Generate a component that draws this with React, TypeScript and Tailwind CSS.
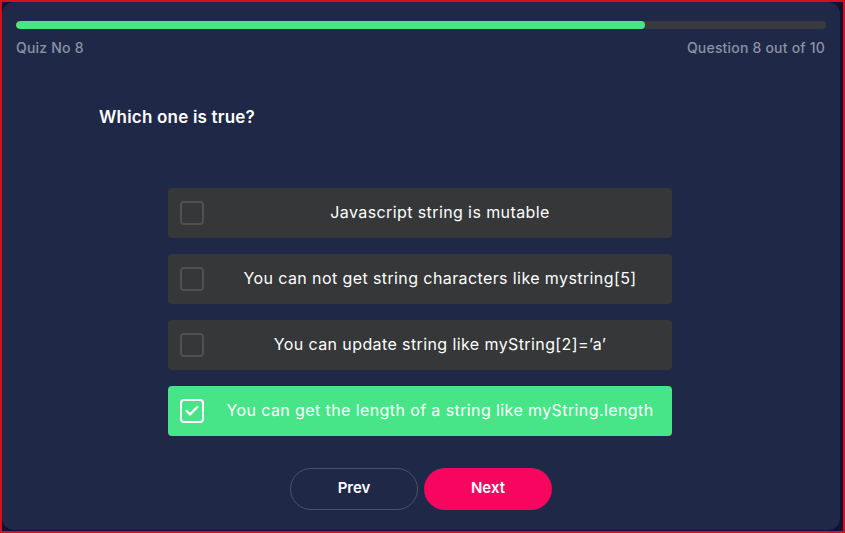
import { Check } from 'lucide-react';

const options = [
  'Javascript string is mutable',
  'You can not get string characters like mystring[5]',
  'You can update string like myString[2]=\u2019a\u2019',
  'You can get the length of a string like myString.length',
];

function Option({ text, checked }: { text: string; checked?: boolean }) {
  return (
    <div
      className={`flex items-center h-[50px] rounded-[4px] pl-3 ${
        checked ? 'bg-[#47e587]' : 'bg-[#353739]'
      }`}
    >
      <div
        className={`w-6 h-6 shrink-0 rounded-[4px] border-2 flex items-center justify-center ${
          checked ? 'border-white' : 'border-[#4d5154]'
        }`}
      >
        {checked && <Check className="w-4 h-4 text-white" strokeWidth={3.5} />}
      </div>
      <p className="flex-1 pl-1 text-center text-[16px] tracking-[0.4px] text-white -mt-[2px]">{text}</p>
    </div>
  );
}

export default function App() {
  return (
    <div
      className="w-[845px] h-[533px] bg-[#0f1230] border-2 border-[#d4101a] pr-[3px] pb-[1px]"
      style={{ fontFamily: 'Inter, "Open Sans", sans-serif' }}
    >
      <div className="h-full rounded-xl bg-[#1f2947] px-[14px] pt-[19px]">
        <div className="h-[8px] rounded-full bg-[#383a3d] overflow-hidden">
          <div className="h-full w-[77.7%] rounded-full bg-[#47e587]" />
        </div>
        <div className="flex justify-between mt-[8px] pr-[1px] text-[14px] font-medium tracking-[0.2px] text-[#8c92a6]">
          <span>Quiz No 8</span>
          <span>Question 8 out of 10</span>
        </div>
        <h1 className="ml-[83px] mt-[47px] text-[17px] font-semibold tracking-[0.2px] text-white">Which one is true?</h1>
        <div className="w-[504px] ml-[152px] mt-[57px] flex flex-col gap-4">
          {options.map((o, i) => (
            <Option key={o} text={o} checked={i === 3} />
          ))}
        </div>
        <div className="flex justify-center gap-[6px] mt-[32px]">
          <button className="w-[128px] h-[42px] rounded-full border border-[#4a5169] text-white text-[15px] font-semibold">
            Prev
          </button>
          <button className="w-[128px] h-[42px] rounded-full bg-[#f8055f] text-white text-[15px] font-semibold">
            Next
          </button>
        </div>
      </div>
    </div>
  );
}
